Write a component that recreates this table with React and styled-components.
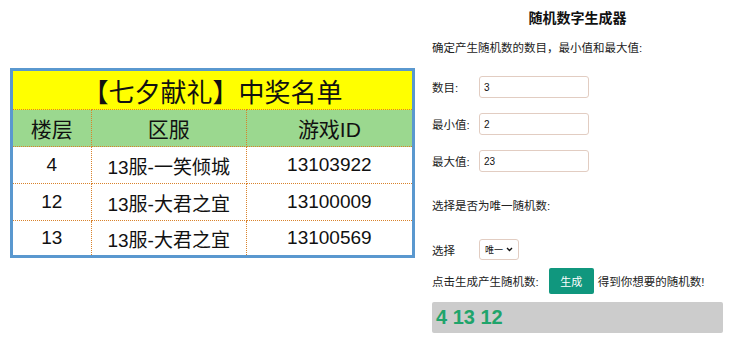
import React from "react";
import styled, { createGlobalStyle } from "styled-components";

const Global = createGlobalStyle`
  html, body { margin: 0; padding: 0; background: #fff; }
  body { font-family: "Liberation Sans", "Noto Sans CJK SC", sans-serif; color: #222; }
`;

const Page = styled.div`
  display: flex;
  align-items: flex-start;
  width: 735px;
  height: 347px;
  overflow: hidden;
`;

const Left = styled.div`
  padding: 68px 0 0 10px;
`;

const Table = styled.table`
  border-collapse: collapse;
  border: 3px solid #5a98cf;
  width: 405px;
  table-layout: fixed;
  font-family: "Liberation Sans", "Noto Sans CJK SC", sans-serif;
`;

const TitleCell = styled.th`
  background: #ffff00;
  height: 38px;
  padding: 0;
  font-size: 26px;
  font-weight: normal;
  color: #111;
  border-bottom: 1px dotted #d9822b;
  text-align: center;
`;

const HeadCell = styled.th`
  background: #9bd88f;
  height: 36px;
  padding: 0;
  font-size: 21px;
  font-weight: normal;
  color: #111;
  border: 1px dotted #d9822b;
  text-align: center;
`;

const Cell = styled.td`
  height: ${(p) => p.$h || 36}px;
  padding: 0;
  font-size: 19px;
  color: #111;
  border: 1px dotted #d9822b;
  text-align: center;
`;

const Right = styled.div`
  margin-left: 17px;
  width: 291px;
  display: flex;
  flex-direction: column;
  font-family: "Liberation Sans", "Noto Sans CJK SC", sans-serif;
  font-size: 11.5px;
  color: #222;
`;

const Title = styled.div`
  height: 36px;
  line-height: 36px;
  text-align: center;
  font-weight: bold;
  font-size: 14px;
  color: #111;
`;

const Text = styled.div`
  height: 24px;
  line-height: 24px;
  margin-top: ${(p) => p.$mt || 0}px;
`;

const Row = styled.div`
  display: flex;
  align-items: center;
  margin-top: ${(p) => p.$mt || 0}px;
  height: ${(p) => p.$h || 22}px;
`;

const Label = styled.span`
  width: 47px;
  flex: none;
`;

const Input = styled.input`
  box-sizing: border-box;
  width: 110px;
  height: 22px;
  border: 1px solid #e2cdc2;
  border-radius: 3px;
  padding: 0 4px;
  font-family: "Liberation Sans", sans-serif;
  font-size: 10px;
  color: #111;
  outline: none;
`;

const Select = styled.div`
  box-sizing: border-box;
  width: 40px;
  height: 21px;
  border: 1px solid #e2cdc2;
  border-radius: 3px;
  display: flex;
  align-items: center;
  justify-content: center;
  gap: 3px;
  font-size: 9px;
  color: #111;
`;

const Button = styled.button`
  margin: 0 4px 0 10px;
  width: 45px;
  height: 26px;
  border: none;
  border-radius: 2px;
  background: #10977e;
  color: #fff;
  font-family: "Noto Sans CJK SC", sans-serif;
  font-size: 11px;
  padding: 0;
`;

const Result = styled.div`
  margin-top: 8px;
  height: 31px;
  background: #cccccc;
  border-radius: 2px;
  display: flex;
  align-items: center;
  padding-left: 4px;
  font-size: 20px;
  font-weight: bold;
  color: #1fa46b;
`;

const rows = [
  ["4", "13服-一笑倾城", "13103922"],
  ["12", "13服-大君之宜", "13100009"],
  ["13", "13服-大君之宜", "13100569"],
];

export default function App() {
  return (
    <Page>
      <Global />
      <Left>
        <Table>
          <colgroup>
            <col style={{ width: 79 }} />
            <col style={{ width: 154 }} />
            <col style={{ width: 166 }} />
          </colgroup>
          <thead>
            <tr>
              <TitleCell colSpan={3}>【七夕献礼】中奖名单</TitleCell>
            </tr>
            <tr>
              <HeadCell>楼层</HeadCell>
              <HeadCell>区服</HeadCell>
              <HeadCell>游戏ID</HeadCell>
            </tr>
          </thead>
          <tbody>
            {rows.map((r, i) => (
              <tr key={i}>
                {r.map((c, j) => (
                  <Cell key={j} $h={i === 2 ? 34 : 36}>{c}</Cell>
                ))}
              </tr>
            ))}
          </tbody>
        </Table>
      </Left>
      <Right>
        <Title>随机数字生成器</Title>
        <Text>确定产生随机数的数目，最小值和最大值:</Text>
        <Row $mt={16}>
          <Label>数目:</Label>
          <Input defaultValue="3" />
        </Row>
        <Row $mt={15}>
          <Label>最小值:</Label>
          <Input defaultValue="2" />
        </Row>
        <Row $mt={15}>
          <Label>最大值:</Label>
          <Input defaultValue="23" />
        </Row>
        <Text $mt={22}>选择是否为唯一随机数:</Text>
        <Row $mt={21} $h={21}>
          <Label>选择</Label>
          <Select>
            <span>唯一</span>
            <svg width="7" height="5" viewBox="0 0 7 5">
              <path d="M1 1 L3.5 3.5 L6 1" fill="none" stroke="#111" strokeWidth="1.4" />
            </svg>
          </Select>
        </Row>
        <Row $mt={8} $h={26}>
          <span>点击生成产生随机数:</span>
          <Button>生成</Button>
          <span>得到你想要的随机数!</span>
        </Row>
        <Result>4 13 12</Result>
      </Right>
    </Page>
  );
}
